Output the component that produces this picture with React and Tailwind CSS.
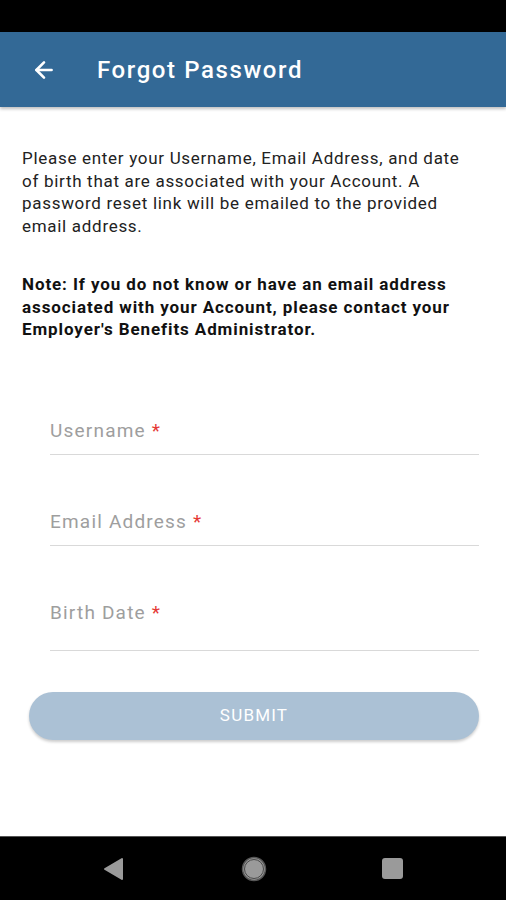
import { ArrowLeft } from "lucide-react";

const fields = [
    { label: "Username", mt: "mt-[58px]", h: "h-[56px]" },
    { label: "Email Address", mt: "mt-[35px]", h: "h-[56px]" },
    { label: "Birth Date", mt: "mt-[35px]", h: "h-[70px]" },
];

const App = () => {
    return (
        <div className="w-[506px] h-[900px] flex flex-col bg-white font-['Roboto',sans-serif] overflow-hidden">
            <div className="h-[32px] bg-black" />

            <div className="h-[75px] bg-[#336996] flex items-center shadow-[0_2px_3px_rgba(0,0,0,0.25)] relative z-10">
                <ArrowLeft className="ml-[31px] w-[26px] h-[26px] text-white" strokeWidth={2.4} />
                <h1 className="ml-[40px] text-[24px] font-medium text-white tracking-[1.6px]">Forgot Password</h1>
            </div>

            <div className="flex-1 flex flex-col">
                <p className="mt-[40px] pl-[22px] pr-[32px] text-[17px] leading-[22.5px] tracking-[0.7px] text-[#222]">
                    Please enter your Username, Email Address, and date of birth that are associated with your Account. A password reset link will be emailed to the provided email address.
                </p>
                <p className="mt-[36px] px-[22px] text-[17px] leading-[22.5px] tracking-[0.9px] font-bold text-[#111]">
                    Note: If you do not know or have an email address associated with your Account, please contact your Employer's Benefits Administrator.
                </p>

                {fields.map((f) => (
                    <div key={f.label} className={`${f.mt} mx-[50px] w-[429px] ${f.h} border-b border-[#d9d9d9] flex items-start`}>
                        <span className="mt-[21px] text-[19px] leading-[22px] tracking-[1.2px] text-[#9e9e9e]">
                            {f.label} <span className="text-[#e53935]">*</span>
                        </span>
                    </div>
                ))}

                <button className="mt-[41px] mx-[29px] w-[450px] h-[48px] rounded-full bg-[#abc1d5] text-white text-[17px] tracking-[1.2px] shadow-[0_2px_3px_rgba(0,0,0,0.2)]">
                    SUBMIT
                </button>
            </div>

            <div className="h-[64px] bg-black border-t border-[#555] flex items-center">
                <svg className="ml-[102px]" width="22" height="24" viewBox="0 0 22 24">
                    <path d="M20 2 L20 22 L3 12 Z" fill="#9a9a9a" stroke="#9a9a9a" strokeWidth="2" strokeLinejoin="round" />
                </svg>
                <svg className="ml-[117px]" width="26" height="26" viewBox="0 0 26 26">
                    <circle cx="13" cy="13" r="11.5" fill="#9a9a9a" stroke="#555" strokeWidth="1.5" />
                    <circle cx="13" cy="13" r="9.5" fill="#9a9a9a" stroke="#333" strokeWidth="0.8" />
                </svg>
                <div className="ml-[115px] w-[21px] h-[21px] rounded-[3px] bg-[#9a9a9a]" />
            </div>
        </div>
    );
};

export default App;
